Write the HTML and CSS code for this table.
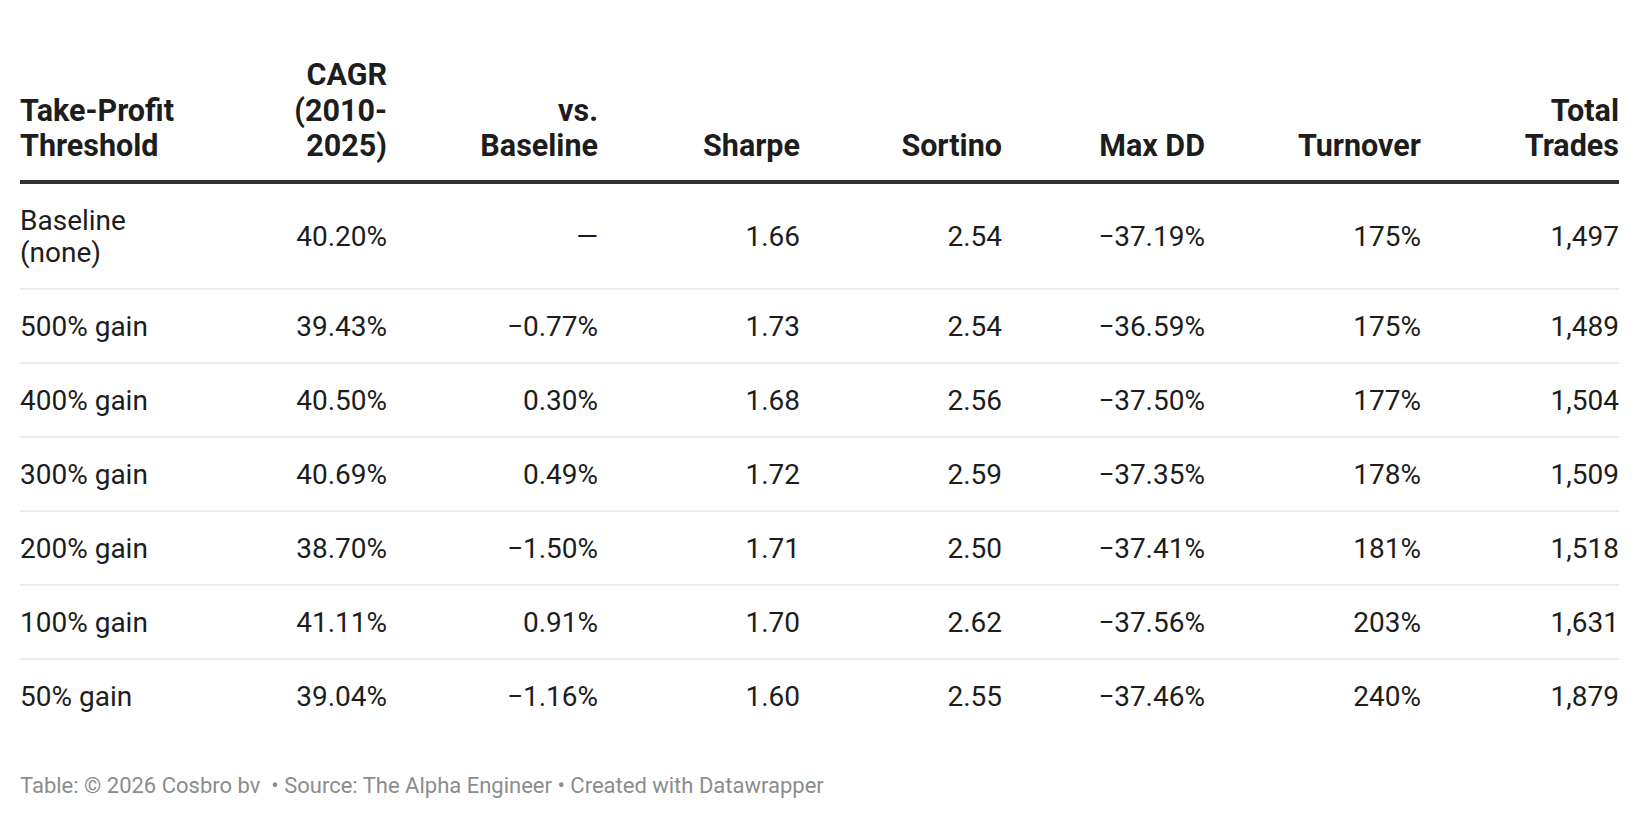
FILE: index.html
```html
<!DOCTYPE html>
<html lang="en">
<head>
<meta charset="utf-8">
<title>Take-Profit Threshold</title>
<link rel="stylesheet" href="styles.css">
</head>
<body>
<div class="wrap">
  <table class="tbl">
    <colgroup>
      <col class="c1"><col class="c2"><col class="c3"><col class="c4"><col class="c5"><col class="c6"><col class="c7"><col class="c8">
    </colgroup>
    <thead>
      <tr>
        <th class="left">Take-Profit<br>Threshold</th>
        <th>CAGR<br>(2010-<br>2025)</th>
        <th>vs.<br>Baseline</th>
        <th>Sharpe</th>
        <th>Sortino</th>
        <th>Max DD</th>
        <th>Turnover</th>
        <th>Total<br>Trades</th>
      </tr>
    </thead>
    <tbody>
      <tr><td class="left">Baseline<br>(none)</td><td>40.20%</td><td>—</td><td>1.66</td><td>2.54</td><td>−37.19%</td><td>175%</td><td>1,497</td></tr>
      <tr><td class="left">500% gain</td><td>39.43%</td><td>−0.77%</td><td>1.73</td><td>2.54</td><td>−36.59%</td><td>175%</td><td>1,489</td></tr>
      <tr><td class="left">400% gain</td><td>40.50%</td><td>0.30%</td><td>1.68</td><td>2.56</td><td>−37.50%</td><td>177%</td><td>1,504</td></tr>
      <tr><td class="left">300% gain</td><td>40.69%</td><td>0.49%</td><td>1.72</td><td>2.59</td><td>−37.35%</td><td>178%</td><td>1,509</td></tr>
      <tr><td class="left">200% gain</td><td>38.70%</td><td>−1.50%</td><td>1.71</td><td>2.50</td><td>−37.41%</td><td>181%</td><td>1,518</td></tr>
      <tr><td class="left">100% gain</td><td>41.11%</td><td>0.91%</td><td>1.70</td><td>2.62</td><td>−37.56%</td><td>203%</td><td>1,631</td></tr>
      <tr><td class="left">50% gain</td><td>39.04%</td><td>−1.16%</td><td>1.60</td><td>2.55</td><td>−37.46%</td><td>240%</td><td>1,879</td></tr>
    </tbody>
  </table>
  <div class="footer">Table: © 2026 Cosbro bv &nbsp;• Source: The Alpha Engineer • Created with Datawrapper</div>
</div>
</body>
</html>
```
FILE: styles.css
```css
html, body {
  margin: 0;
  padding: 0;
  background: #ffffff;
}
body {
  font-family: Roboto, "Liberation Sans", sans-serif;
  color: #1d1d1d;
}
.wrap {
  padding: 57px 20px 0 20px;
}
.tbl {
  width: 1599px;
  table-layout: fixed;
  border-collapse: collapse;
  border-spacing: 0;
}
.c1 { width: 230px; }
.c2 { width: 137px; }
.c3 { width: 211px; }
.c4 { width: 202px; }
.c5 { width: 202px; }
.c6 { width: 203px; }
.c7 { width: 216px; }
.c8 { width: 198px; }
.tbl th {
  font-size: 30.5px;
  font-weight: 700;
  line-height: 35.5px;
  text-align: right;
  vertical-align: bottom;
  padding: 0 0 16.5px 0;
  border-bottom: 4px solid #333333;
  color: #1d1d1d;
  white-space: nowrap;
}
.tbl td {
  font-size: 28px;
  font-weight: 400;
  line-height: 32px;
  text-align: right;
  vertical-align: middle;
  padding: 21px 0 19px 0;
  border-bottom: 2px solid #ececec;
  white-space: nowrap;
}
.tbl tbody tr:last-child td {
  border-bottom: none;
}
.tbl .left {
  text-align: left;
}
.footer {
  margin-top: 41px;
  font-size: 22px;
  line-height: 26px;
  color: #8c8c8c;
}
```
